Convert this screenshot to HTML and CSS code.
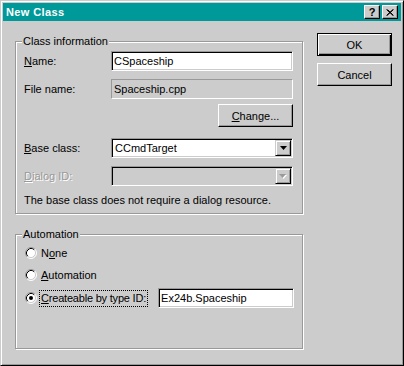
FILE: index.html
```html
<!DOCTYPE html>
<html lang="en">
<head>
    <meta charset="UTF-8">
    <title>New Class</title>
    <link rel="stylesheet" href="styles.css">
</head>
<body>
    <div class="window">
        <div class="titlebar">
            <span class="title">New Class</span>
            <div class="capbtns">
                <span class="capbtn">?</span>
                <span class="capbtn">
                    <svg width="8" height="7" viewBox="0 0 8 7"><path d="M0.5 0.5 L7 6.5 M1.5 0.5 L7.5 6.5 M7 0.5 L0.5 6.5 M7.5 0.5 L1 6.5" stroke="#000" stroke-width="1" fill="none"/></svg>
                </span>
            </div>
        </div>
        <div class="content">
            <div class="groups">
                <div class="group group-info">
                    <span class="legend">Class information</span>
                    <div class="row">
                        <span class="lbl"><u>N</u>ame:</span>
                        <div class="edit">CSpaceship</div>
                    </div>
                    <div class="row row-gap">
                        <span class="lbl">File name:</span>
                        <div class="edit edit-static">Spaceship.cpp</div>
                    </div>
                    <div class="row row-btn">
                        <button class="btn"><u>C</u>hange...</button>
                    </div>
                    <div class="row row-base">
                        <span class="lbl"><u>B</u>ase class:</span>
                        <div class="combo">
                            <span class="combo-text">CCmdTarget</span>
                            <span class="drop">
                                <svg width="7" height="4" viewBox="0 0 7 4"><polygon points="0,0 7,0 3.5,4" fill="#000"/></svg>
                            </span>
                        </div>
                    </div>
                    <div class="row row-gap">
                        <span class="lbl lbl-disabled"><u>D</u>ialog ID:</span>
                        <div class="combo combo-disabled">
                            <span class="combo-text"></span>
                            <span class="drop">
                                <svg width="8" height="5" viewBox="0 0 8 5"><polygon points="1,1 8,1 4.5,5" fill="#fff"/><polygon points="0,0 7,0 3.5,4" fill="#999"/></svg>
                            </span>
                        </div>
                    </div>
                    <div class="note">The base class does not require a dialog resource.</div>
                </div>

                <div class="group group-auto">
                    <span class="legend">Automation</span>
                    <div class="radio-row">
                        <svg class="radio" width="12" height="12" viewBox="0 0 12 12">
                            <circle cx="6" cy="6" r="5" fill="#fff"/>
                            <path d="M2.11 9.89 A5.5 5.5 0 0 1 9.89 2.11" stroke="#999" fill="none"/>
                            <path d="M9.89 2.11 A5.5 5.5 0 0 1 2.11 9.89" stroke="#fff" fill="none"/>
                            <path d="M2.82 9.18 A4.5 4.5 0 0 1 9.18 2.82" stroke="#000" fill="none"/>
                            <path d="M9.18 2.82 A4.5 4.5 0 0 1 2.82 9.18" stroke="#ccc" fill="none"/>
                        </svg>
                        <span class="radio-label">N<u>o</u>ne</span>
                    </div>
                    <div class="radio-row radio-gap">
                        <svg class="radio" width="12" height="12" viewBox="0 0 12 12">
                            <circle cx="6" cy="6" r="5" fill="#fff"/>
                            <path d="M2.11 9.89 A5.5 5.5 0 0 1 9.89 2.11" stroke="#999" fill="none"/>
                            <path d="M9.89 2.11 A5.5 5.5 0 0 1 2.11 9.89" stroke="#fff" fill="none"/>
                            <path d="M2.82 9.18 A4.5 4.5 0 0 1 9.18 2.82" stroke="#000" fill="none"/>
                            <path d="M9.18 2.82 A4.5 4.5 0 0 1 2.82 9.18" stroke="#ccc" fill="none"/>
                        </svg>
                        <span class="radio-label"><u>A</u>utomation</span>
                    </div>
                    <div class="radio-row radio-gap-last">
                        <svg class="radio" width="12" height="12" viewBox="0 0 12 12">
                            <circle cx="6" cy="6" r="5" fill="#fff"/>
                            <path d="M2.11 9.89 A5.5 5.5 0 0 1 9.89 2.11" stroke="#999" fill="none"/>
                            <path d="M9.89 2.11 A5.5 5.5 0 0 1 2.11 9.89" stroke="#fff" fill="none"/>
                            <path d="M2.82 9.18 A4.5 4.5 0 0 1 9.18 2.82" stroke="#000" fill="none"/>
                            <path d="M9.18 2.82 A4.5 4.5 0 0 1 2.82 9.18" stroke="#ccc" fill="none"/>
                            <circle cx="6" cy="6" r="2" fill="#000"/>
                        </svg>
                        <span class="radio-label radio-focus"><u>C</u>reateable by type ID:</span>
                        <div class="edit edit-typeid">Ex24b.Spaceship</div>
                    </div>
                </div>
            </div>

            <div class="actions">
                <button class="btn btn-default">OK</button>
                <button class="btn">Cancel</button>
            </div>
        </div>
    </div>
</body>
</html>
```

FILE: styles.css
```css
body {
    margin: 0;
    font-family: "Liberation Sans", Arial, sans-serif;
    font-size: 11px;
    color: #000;
}
.window {
    width: 404px;
    height: 366px;
    box-sizing: border-box;
    background: #ccc;
    border: 1px solid;
    border-color: #ccc #000 #000 #ccc;
    box-shadow: inset 1px 1px #fff, inset -1px -1px #999;
    padding: 2px;
    display: flex;
    flex-direction: column;
}
.titlebar {
    height: 18px;
    flex: 0 0 auto;
    background: #009999;
    display: flex;
    align-items: center;
    justify-content: space-between;
    padding: 0 3px 0 3px;
}
.title {
    color: #fff;
    font-weight: bold;
    font-size: 11px;
    letter-spacing: 0.4px;
}
.capbtns {
    display: flex;
    gap: 2px;
}
.capbtn {
    width: 16px;
    height: 14px;
    box-sizing: border-box;
    background: #ccc;
    border: 1px solid;
    border-color: #fff #000 #000 #fff;
    box-shadow: inset -1px -1px #999;
    display: flex;
    align-items: center;
    justify-content: center;
    font-weight: bold;
    font-size: 11px;
    line-height: 1;
}
.content {
    display: flex;
    flex: 1;
}
.groups {
    margin-left: 12px;
    width: 289px;
}
.group {
    position: relative;
    box-sizing: border-box;
    width: 288px;
    border: 1px solid #999;
    box-shadow: inset 1px 1px #fff, 1px 1px #fff;
}
.legend {
    position: absolute;
    top: -8px;
    left: 6px;
    padding: 0 1px;
    background: #ccc;
    line-height: 14px;
}
.group-info {
    margin-top: 20px;
    height: 173px;
    padding: 9px 0 0 8px;
}
.group-auto {
    margin-top: 20px;
    height: 115px;
    padding: 8px 0 0 9px;
}
.row {
    display: flex;
    align-items: center;
    height: 20px;
}
.row-gap {
    margin-top: 8px;
}
.row-btn {
    margin-top: 5px;
    height: 23px;
    width: 269px;
    justify-content: flex-end;
}
.row-base {
    margin-top: 11px;
}
.lbl {
    width: 87px;
}
.lbl-disabled {
    color: #999;
    text-shadow: 1px 1px #fff;
}
.edit {
    width: 182px;
    height: 20px;
    box-sizing: border-box;
    border: 1px solid;
    border-color: #999 #fff #fff #999;
    box-shadow: inset 1px 1px #000, inset -1px -1px #ccc;
    background: #fff;
    padding: 0 2px;
    display: flex;
    align-items: center;
    white-space: nowrap;
}
.edit-static {
    background: transparent;
    box-shadow: none;
}
.edit-typeid {
    width: 136px;
    margin-left: 11px;
}
.combo {
    width: 182px;
    height: 20px;
    box-sizing: border-box;
    border: 1px solid;
    border-color: #999 #fff #fff #999;
    box-shadow: inset 1px 1px #000, inset -1px -1px #ccc;
    background: #fff;
    padding: 1px;
    display: flex;
    align-items: center;
}
.combo-disabled {
    background: #ccc;
}
.combo-text {
    flex: 1;
    padding-left: 2px;
}
.drop {
    width: 16px;
    height: 16px;
    box-sizing: border-box;
    background: #ccc;
    border: 1px solid;
    border-color: #ccc #000 #000 #ccc;
    box-shadow: inset 1px 1px #fff, inset -1px -1px #999;
    display: flex;
    align-items: center;
    justify-content: center;
}
.note {
    margin-top: 8px;
    line-height: 13px;
    white-space: nowrap;
}
.radio-row {
    display: flex;
    align-items: center;
    height: 20px;
}
.radio-gap {
    margin-top: 2px;
}
.radio-gap-last {
    margin-top: 3px;
}
.radio {
    flex: 0 0 auto;
}
.radio-label {
    margin-left: 4px;
}
.radio-focus {
    margin-left: 3px;
    padding: 1px 1px 2px 1px;
    outline: 1px dotted #000;
    letter-spacing: -0.2px;
}
.actions {
    margin-left: 13px;
    margin-top: 12px;
    display: flex;
    flex-direction: column;
    gap: 7px;
}
.btn {
    width: 75px;
    height: 23px;
    box-sizing: border-box;
    background: #ccc;
    border: 1px solid;
    border-color: #fff #000 #000 #fff;
    box-shadow: inset -1px -1px #999;
    font: inherit;
    color: #000;
    padding: 0;
    margin: 0;
}
.btn-default {
    border-color: #000;
    box-shadow: inset 1px 1px #fff, inset -1px -1px #000, inset -2px -2px #999;
}
```
